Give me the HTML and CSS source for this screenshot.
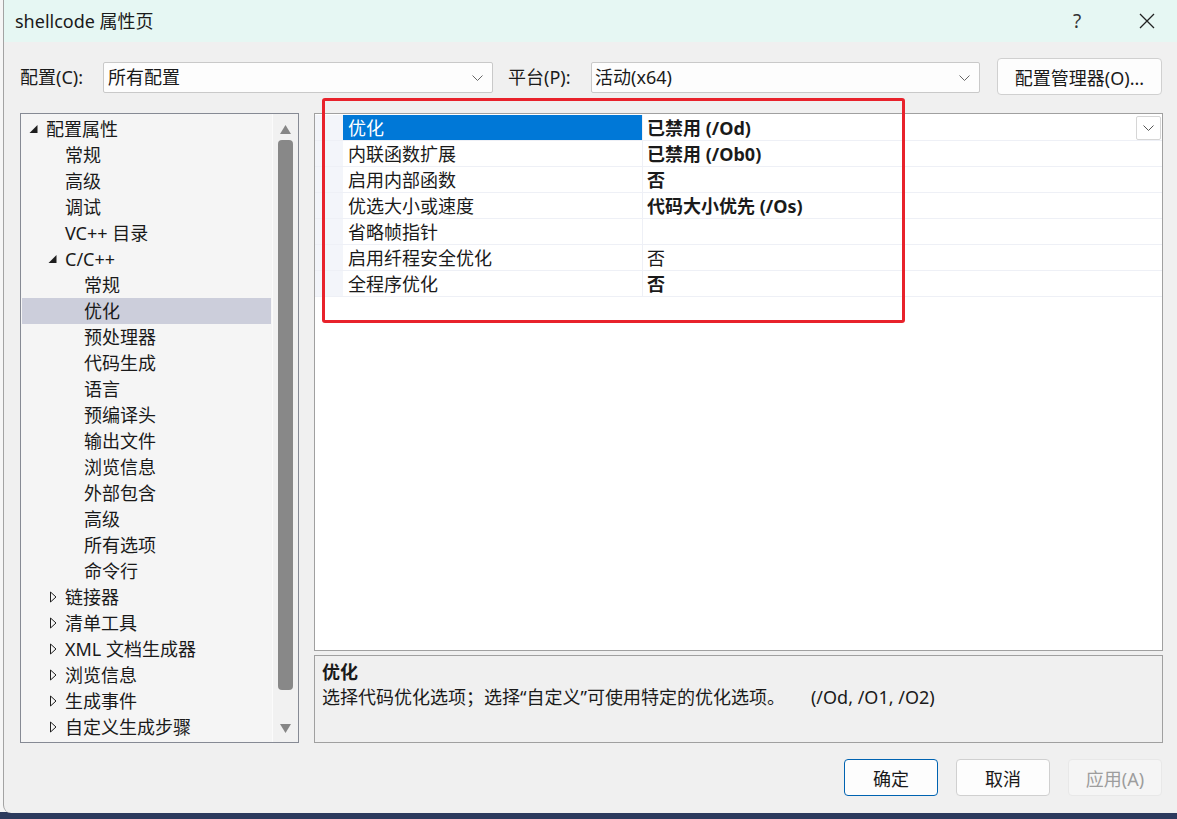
FILE: index.html
```html
<!DOCTYPE html>
<html lang="zh-CN">
<head>
<meta charset="utf-8">
<title>shellcode 属性页</title>
<link rel="stylesheet" href="styles.css">
</head>
<body>
<div class="window">
  <div class="titlebar">
    <span class="title">shellcode 属性页</span>
    <span class="help">?</span>
    <span class="close"><svg width="16" height="16" viewBox="0 0 16 16"><path d="M1 1 L15 15 M15 1 L1 15" stroke="#222" stroke-width="1.3" fill="none"/></svg></span>
  </div>

  <div class="toolbar">
    <span class="lbl">配置(C):</span>
    <div class="combo c1"><span>所有配置</span><svg class="chev" width="11" height="6" viewBox="0 0 11 6"><path d="M0.5 0.5 L5.5 5.5 L10.5 0.5" stroke="#666" stroke-width="1" fill="none"/></svg></div>
    <span class="lbl lbl2">平台(P):</span>
    <div class="combo c2"><span>活动(x64)</span><svg class="chev" width="11" height="6" viewBox="0 0 11 6"><path d="M0.5 0.5 L5.5 5.5 L10.5 0.5" stroke="#666" stroke-width="1" fill="none"/></svg></div>
    <button class="btn mgr">配置管理器(O)...</button>
  </div>

  <div class="main">
    <div class="tree">
      <div class="tree-list">
        <div class="trow l0"><span class="arr"><svg width="9" height="10" viewBox="0 0 9 10"><polygon points="8.5,1 8.5,9 0.5,9" fill="#1e1e1e"/></svg></span>配置属性</div>
        <div class="trow l1"><span class="arr"></span>常规</div>
        <div class="trow l1"><span class="arr"></span>高级</div>
        <div class="trow l1"><span class="arr"></span>调试</div>
        <div class="trow l1"><span class="arr"></span>VC++ 目录</div>
        <div class="trow l1"><span class="arr"><svg width="9" height="10" viewBox="0 0 9 10"><polygon points="8.5,1 8.5,9 0.5,9" fill="#1e1e1e"/></svg></span>C/C++</div>
        <div class="trow l2"><span class="arr"></span>常规</div>
        <div class="trow l2 sel"><span class="arr"></span>优化</div>
        <div class="trow l2"><span class="arr"></span>预处理器</div>
        <div class="trow l2"><span class="arr"></span>代码生成</div>
        <div class="trow l2"><span class="arr"></span>语言</div>
        <div class="trow l2"><span class="arr"></span>预编译头</div>
        <div class="trow l2"><span class="arr"></span>输出文件</div>
        <div class="trow l2"><span class="arr"></span>浏览信息</div>
        <div class="trow l2"><span class="arr"></span>外部包含</div>
        <div class="trow l2"><span class="arr"></span>高级</div>
        <div class="trow l2"><span class="arr"></span>所有选项</div>
        <div class="trow l2"><span class="arr"></span>命令行</div>
        <div class="trow l1"><span class="arr"><svg width="9" height="12" viewBox="0 0 9 12"><polygon points="2.5,1 8,6 2.5,11" fill="none" stroke="#1e1e1e" stroke-width="1"/></svg></span>链接器</div>
        <div class="trow l1"><span class="arr"><svg width="9" height="12" viewBox="0 0 9 12"><polygon points="2.5,1 8,6 2.5,11" fill="none" stroke="#1e1e1e" stroke-width="1"/></svg></span>清单工具</div>
        <div class="trow l1"><span class="arr"><svg width="9" height="12" viewBox="0 0 9 12"><polygon points="2.5,1 8,6 2.5,11" fill="none" stroke="#1e1e1e" stroke-width="1"/></svg></span>XML 文档生成器</div>
        <div class="trow l1"><span class="arr"><svg width="9" height="12" viewBox="0 0 9 12"><polygon points="2.5,1 8,6 2.5,11" fill="none" stroke="#1e1e1e" stroke-width="1"/></svg></span>浏览信息</div>
        <div class="trow l1"><span class="arr"><svg width="9" height="12" viewBox="0 0 9 12"><polygon points="2.5,1 8,6 2.5,11" fill="none" stroke="#1e1e1e" stroke-width="1"/></svg></span>生成事件</div>
        <div class="trow l1"><span class="arr"><svg width="9" height="12" viewBox="0 0 9 12"><polygon points="2.5,1 8,6 2.5,11" fill="none" stroke="#1e1e1e" stroke-width="1"/></svg></span>自定义生成步骤</div>
      </div>
      <div class="scrollbar">
        <svg class="sarrow" width="11" height="9" viewBox="0 0 11 9"><polygon points="5.5,0 11,9 0,9" fill="#868686"/></svg>
        <div class="thumb"></div>
        <svg class="sarrow" width="11" height="9" viewBox="0 0 11 9"><polygon points="0,0 11,0 5.5,9" fill="#868686"/></svg>
      </div>
    </div>

    <div class="right">
      <div class="grid">
        <div class="grow">
          <div class="gut"></div>
          <div class="name selname">优化</div>
          <div class="val bold">已禁用 (/Od)</div>
          <div class="ddbtn"><svg width="11" height="6" viewBox="0 0 11 6"><path d="M0.5 0.5 L5.5 5.5 L10.5 0.5" stroke="#555" stroke-width="1" fill="none"/></svg></div>
        </div>
        <div class="grow">
          <div class="gut"></div>
          <div class="name">内联函数扩展</div>
          <div class="val bold">已禁用 (/Ob0)</div>
        </div>
        <div class="grow">
          <div class="gut"></div>
          <div class="name">启用内部函数</div>
          <div class="val bold">否</div>
        </div>
        <div class="grow">
          <div class="gut"></div>
          <div class="name">优选大小或速度</div>
          <div class="val bold">代码大小优先 (/Os)</div>
        </div>
        <div class="grow">
          <div class="gut"></div>
          <div class="name">省略帧指针</div>
          <div class="val"></div>
        </div>
        <div class="grow">
          <div class="gut"></div>
          <div class="name">启用纤程安全优化</div>
          <div class="val">否</div>
        </div>
        <div class="grow">
          <div class="gut"></div>
          <div class="name">全程序优化</div>
          <div class="val bold">否</div>
        </div>
      </div>
      <div class="desc">
        <div class="desc-title">优化</div>
        <div class="desc-text">选择代码优化选项；选择“自定义”可使用特定的优化选项。<span class="flags">(/Od, /O1, /O2)</span></div>
      </div>
    </div>
  </div>

  <div class="buttons">
    <button class="btn dlg primary">确定</button>
    <button class="btn dlg">取消</button>
    <button class="btn dlg disabled">应用(A)</button>
  </div>
</div>
<div class="annot"></div>
</body>
</html>
```

FILE: styles.css
```css
* { box-sizing: border-box; }

html, body {
  margin: 0;
  padding: 0;
}

body {
  width: 1177px;
  height: 819px;
  overflow: hidden;
  background: linear-gradient(to bottom, #f6f6f6 0, #f6f6f6 812px, #2c3a5d 812px);
  font-family: "Noto Sans", "Noto Sans CJK SC", sans-serif;
  font-size: 18px;
  color: #1a1a1a;
  position: relative;
}

.window {
  margin-left: 3px;
  width: 1174px;
  height: 813px;
  background: #f0f0f0;
  border-left: 1px solid #a3a3a3;
  border-bottom-left-radius: 8px;
  overflow: hidden;
  display: flex;
  flex-direction: column;
}

.titlebar {
  height: 42px;
  flex: none;
  background: #e6f7f3;
  display: flex;
  align-items: center;
  padding-left: 11px;
}

.title {
  flex: 1;
  line-height: 24px;
}

.help {
  width: 20px;
  text-align: center;
  margin-right: 52px;
  color: #333;
  font-size: 19px;
}

.close {
  width: 16px;
  height: 16px;
  display: flex;
  margin-right: 22px;
}

.toolbar {
  display: flex;
  align-items: flex-start;
  margin-top: 16px;
  padding-left: 16px;
  height: 37px;
  flex: none;
}

.lbl {
  width: 83px;
  line-height: 31px;
  margin-top: 4px;
}

.lbl2 {
  margin-left: 15px;
}

.combo {
  margin-top: 4px;
  height: 31px;
  background: #fdfdfd;
  border: 1px solid #c9c9c9;
  border-radius: 2px;
  display: flex;
  align-items: center;
  justify-content: space-between;
  padding: 0 9px 0 4px;
  line-height: 29px;
}

.c1 { width: 390px; }
.c2 { width: 389px; padding-left: 3px; }

.chev { flex: none; }

.btn {
  font-family: "Noto Sans", "Noto Sans CJK SC", sans-serif;
  font-size: 18px;
  color: #1a1a1a;
  background: #fdfdfd;
  border: 1px solid #d0d0d0;
  border-radius: 4px;
  padding: 0;
}

.mgr {
  margin-left: 17px;
  width: 165px;
  height: 37px;
}

.main {
  display: flex;
  gap: 15px;
  margin-top: 18px;
  padding-left: 16px;
  height: 630px;
  flex: none;
}

.tree {
  width: 279px;
  height: 630px;
  border: 1px solid #868a94;
  background: #f5f5f5;
  display: flex;
}

.tree-list {
  width: 252px;
  padding: 2px 1px 0 1px;
  border-right: 1px solid #fbfbfb;
}

.trow {
  height: 26px;
  line-height: 27px;
  display: flex;
  align-items: center;
  white-space: nowrap;
}

.trow.l0 { padding-left: 7px; }
.trow.l1 { padding-left: 26px; }
.trow.l2 { padding-left: 45px; }

.trow.sel { background: #cccedb; }

.arr {
  width: 17px;
  flex: none;
  display: flex;
  align-items: center;
}

.arr svg { display: block; }

.scrollbar {
  flex: 1;
  background: #f1f1f1;
  display: flex;
  flex-direction: column;
  align-items: center;
  padding-top: 11px;
  padding-bottom: 8px;
}

.sarrow { display: block; flex: none; }

.thumb {
  width: 15px;
  margin: 6px 0 34px 0;
  height: 550px;
  background: #888888;
  border-radius: 4px;
}

.right {
  width: 849px;
  display: flex;
  flex-direction: column;
  gap: 4px;
}

.grid {
  height: 538px;
  flex: none;
  background: #ffffff;
  border: 1px solid #a0a0a0;
  padding-top: 1px;
}

.grow {
  display: flex;
  height: 26px;
  border-bottom: 1px solid #eef0f6;
  position: relative;
}

.gut {
  width: 28px;
  flex: none;
  background: #f3f5fa;
}

.name {
  width: 300px;
  flex: none;
  padding-left: 5px;
  line-height: 27px;
  border-right: 1px solid #eef0f6;
  white-space: nowrap;
}

.selname {
  background: #0078d7;
  color: #ffffff;
}

.val {
  flex: 1;
  padding-left: 4px;
  line-height: 27px;
  white-space: nowrap;
}

.bold { font-weight: 700; }

.ddbtn {
  position: absolute;
  right: 1px;
  top: 1px;
  width: 25px;
  height: 24px;
  background: #ffffff;
  border: 1px solid #d6d6d6;
  border-radius: 2px;
  display: flex;
  align-items: center;
  justify-content: center;
}

.desc {
  flex: 1;
  border: 1px solid #a0a0a0;
  background: #f0f0f0;
  padding: 4px 7px 0 7px;
}

.desc-title {
  font-weight: 700;
  line-height: 25px;
}

.desc-text {
  line-height: 25px;
  white-space: nowrap;
}

.flags {
  margin-left: 26px;
}

.buttons {
  display: flex;
  justify-content: flex-end;
  gap: 18px;
  margin-top: 16px;
  padding-right: 15px;
}

.dlg {
  width: 94px;
  height: 37px;
}

.primary {
  border: 1px solid #0063b1;
}

.disabled {
  background: #f5f5f5;
  border-color: #e8e8e8;
  color: #9d9d9d;
}

.annot {
  position: absolute;
  left: 322px;
  top: 98px;
  width: 583px;
  height: 225px;
  border: 3px solid #e8222b;
  border-radius: 3px;
  pointer-events: none;
}
```
